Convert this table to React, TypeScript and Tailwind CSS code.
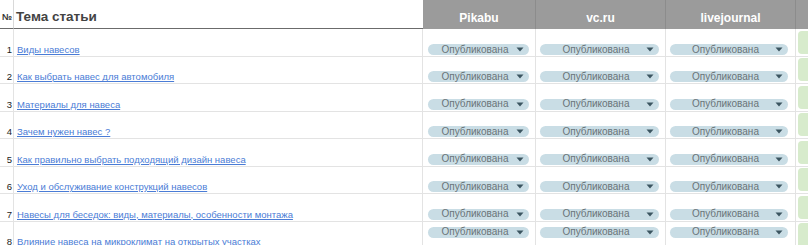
import React from 'react';

const rows = [
  'Виды навесов',
  'Как выбрать навес для автомобиля',
  'Материалы для навеса',
  'Зачем нужен навес ?',
  'Как правильно выбрать подходящий дизайн навеса',
  'Уход и обслуживание конструкций навесов',
  'Навесы для беседок: виды, материалы, особенности монтажа',
  'Влияние навеса на микроклимат на открытых участках',
];

const grid = 'grid grid-cols-[14px_409px_113px_130px_130px_1fr]';

function StatusChip({ last }: { last: boolean }) {
  return (
    <div
      className={`flex h-[11px] w-full items-center rounded-full bg-[#c9dde5] pl-[10px] pr-[5px] ${last ? 'mt-[6px]' : 'mt-[15px]'}`}
    >
      <span className="flex-1 text-center text-[10px] leading-none text-[#6a7478]">Опубликована</span>
      <svg width="8" height="5" viewBox="0 0 8 5" className="ml-1 shrink-0">
        <path d="M0.5 0.5 H7.5 L4 4.5 Z" fill="#3b5560" />
      </svg>
    </div>
  );
}

export default function App() {
  return (
    <div className="h-[245px] w-[808px] overflow-hidden bg-white font-['Liberation_Sans',Arial,sans-serif]">
      {/* Header */}
      <div className={`${grid} h-[29px]`}>
        <div className="flex items-end justify-center border-r border-b border-r-[#d9d9d9] border-b-[#6b6b6b] pb-[6px]">
          <span className="text-[9px] font-bold leading-none tracking-[-0.5px] text-[#333]">№</span>
        </div>
        <div className="flex items-end border-b border-[#6b6b6b] pb-[3px] pl-[2px]">
          <span className="text-[13.5px] font-semibold leading-[16px] text-[#434343]">Тема статьи</span>
        </div>
        {['Pikabu', 'vc.ru', 'livejournal'].map((h) => (
          <div key={h} className="flex items-end justify-center border-r border-[#8c8c8c] bg-[#9b9b9b] pb-[3px]">
            <span className="text-[12px] font-bold leading-[15px] text-white">{h}</span>
          </div>
        ))}
        <div className="bg-[#9b9b9b]" />
      </div>

      {/* Rows */}
      {rows.map((title, i) => {
        const last = i === rows.length - 1;
        return (
          <div key={title} className={`${grid} ${last ? 'h-[40px]' : 'h-[27.43px]'}`}>
            <div className="border-r border-b border-[#e3e3e3] pr-[1px] text-right">
              <div className={`text-[9.5px] font-medium leading-[12px] text-[#222] ${last ? 'pt-[15px]' : 'pt-[15px]'}`}>{i + 1}</div>
            </div>
            <div className="border-r border-b border-[#e3e3e3] pl-[3px]">
              <a
                href="#"
                className={`block text-[9.5px] leading-[12px] text-[#4a7cd6] underline ${last ? 'pt-[15px]' : 'pt-[15px]'}`}
              >
                {title}
              </a>
            </div>
            <div className="border-r border-b border-[#e3e3e3] pl-[5px] pr-[6px]">
              <StatusChip last={last} />
            </div>
            <div className="border-r border-b border-[#e3e3e3] pl-[4px] pr-[6px]">
              <StatusChip last={last} />
            </div>
            <div className="border-r border-b border-[#e3e3e3] pl-[4px] pr-[7px]">
              <StatusChip last={last} />
            </div>
            <div className="border-b border-[#e3e3e3] py-[2px] pl-[2px]">
              <div className="h-full rounded-l-[4px] bg-[#d7ebcc]" />
            </div>
          </div>
        );
      })}
    </div>
  );
}
